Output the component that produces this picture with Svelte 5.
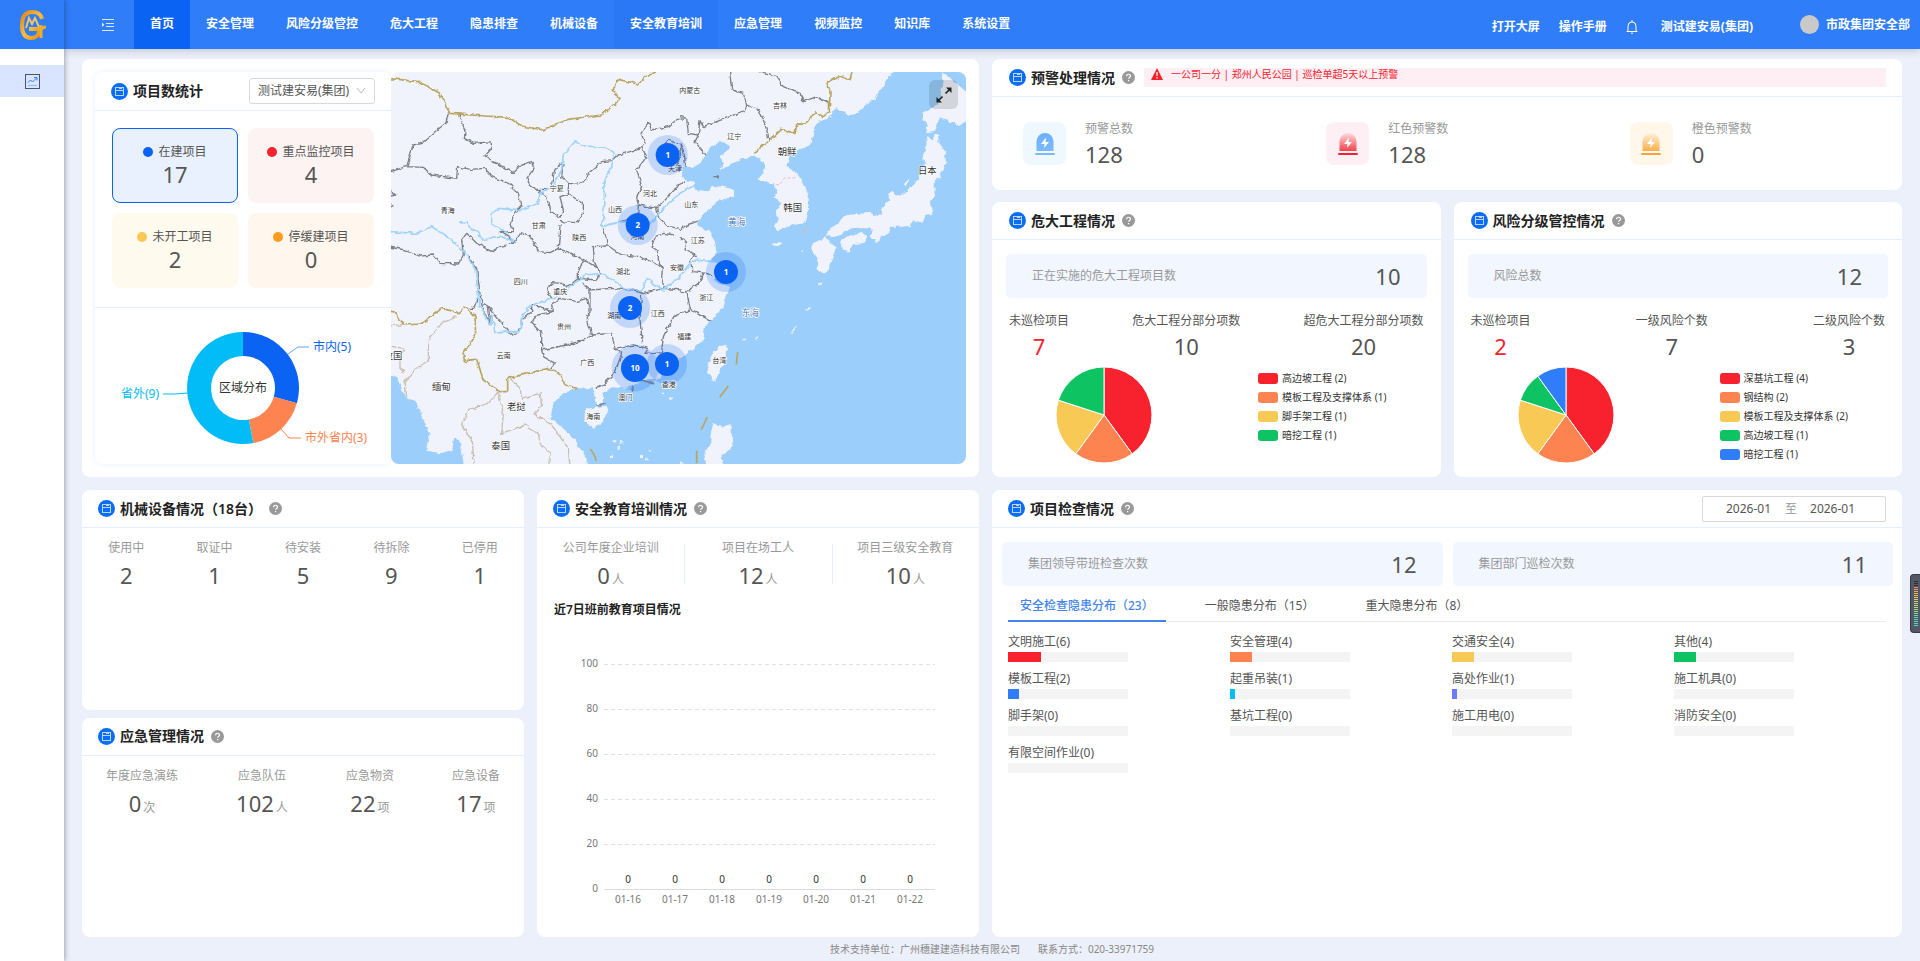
<svelte:options runes={true} />

<script lang="ts">
  type Slice = { name: string; value: number; color: string }

  const navItems = [
    '首页',
    '安全管理',
    '风险分级管控',
    '危大工程',
    '隐患排查',
    '机械设备',
    '安全教育培训',
    '应急管理',
    '视频监控',
    '知识库',
    '系统设置',
  ]

  const projectStats = [
    { name: '在建项目', value: 17, tone: 'blue' },
    { name: '重点监控项目', value: 4, tone: 'red' },
    { name: '未开工项目', value: 2, tone: 'yellow' },
    { name: '停缓建项目', value: 0, tone: 'orange' },
  ]
  let activeStat = $state('在建项目')

  const areas: Slice[] = [
    { name: '市内', value: 5, color: '#0b63f3' },
    { name: '市外省内', value: 3, color: '#fd8350' },
    { name: '省外', value: 9, color: '#02bcf7' },
  ]

  const warnings = [
    { name: '预警总数', value: 128, id: 'total', from: '#6cb0ff', to: '#7db9ff', base: '#7db9ff', bg: '#eff7ff' },
    { name: '红色预警数', value: 128, id: 'red', from: '#ffdbe0', to: '#f4434c', base: '#f5222d', bg: '#feeff4' },
    { name: '橙色预警数', value: 0, id: 'orange', from: '#fff0da', to: '#fbae4c', base: '#f9a43a', bg: '#fff7ea' },
  ]

  const pieCards = [
    {
      title: '危大工程情况',
      total: { name: '正在实施的危大工程项目数', value: 10 },
      stats: [
        { name: '未巡检项目', value: 7 },
        { name: '危大工程分部分项数', value: 10 },
        { name: '超危大工程分部分项数', value: 20 },
      ],
      slices: [
        { name: '高边坡工程', value: 2, color: '#f7222d' },
        { name: '模板工程及支撑体系', value: 1, color: '#fd8350' },
        { name: '脚手架工程', value: 1, color: '#f9c956' },
        { name: '暗挖工程', value: 1, color: '#0dc362' },
      ],
    },
    {
      title: '风险分级管控情况',
      total: { name: '风险总数', value: 12 },
      stats: [
        { name: '未巡检项目', value: 2 },
        { name: '一级风险个数', value: 7 },
        { name: '二级风险个数', value: 3 },
      ],
      slices: [
        { name: '深基坑工程', value: 4, color: '#f7222d' },
        { name: '钢结构', value: 2, color: '#fd8350' },
        { name: '模板工程及支撑体系', value: 2, color: '#f9c956' },
        { name: '高边坡工程', value: 1, color: '#0dc362' },
        { name: '暗挖工程', value: 1, color: '#2f7df9' },
      ],
    },
  ]

  const machines = [
    { name: '使用中', value: 2 },
    { name: '取证中', value: 1 },
    { name: '待安装', value: 5 },
    { name: '待拆除', value: 9 },
    { name: '已停用', value: 1 },
  ]
  const emergency = [
    { name: '年度应急演练', value: 0, unit: '次' },
    { name: '应急队伍', value: 102, unit: '人' },
    { name: '应急物资', value: 22, unit: '项' },
    { name: '应急设备', value: 17, unit: '项' },
  ]
  const education = [
    { name: '公司年度企业培训', value: 0 },
    { name: '项目在场工人', value: 12 },
    { name: '项目三级安全教育', value: 10 },
  ]
  const days = ['01-16', '01-17', '01-18', '01-19', '01-20', '01-21', '01-22']
  const ticks = [100, 80, 60, 40, 20]

  const tabs = [
    { name: '安全检查隐患分布', count: 23 },
    { name: '一般隐患分布', count: 15 },
    { name: '重大隐患分布', count: 8 },
  ]
  let activeTab = $state(0)

  const hazards: Slice[] = [
    { name: '文明施工', value: 6, color: '#f7222d' },
    { name: '安全管理', value: 4, color: '#fd8350' },
    { name: '交通安全', value: 4, color: '#f9c956' },
    { name: '其他', value: 4, color: '#0dc362' },
    { name: '模板工程', value: 2, color: '#2f7df9' },
    { name: '起重吊装', value: 1, color: '#02bcf7' },
    { name: '高处作业', value: 1, color: '#6b79fc' },
    { name: '施工机具', value: 0, color: '' },
    { name: '脚手架', value: 0, color: '' },
    { name: '基坑工程', value: 0, color: '' },
    { name: '施工用电', value: 0, color: '' },
    { name: '消防安全', value: 0, color: '' },
    { name: '有限空间作业', value: 0, color: '' },
  ]
  const hazardTotal = hazards.reduce((n, h) => n + h.value, 0)

  let company = $state('测试建安易(集团)')
  let startMonth = $state('2026-01')
  let endMonth = $state('2026-01')

  const provinces = [
    { name: '内蒙古', x: 914, y: 99 },
    { name: '吉林', x: 1185, y: 143 },
    { name: '辽宁', x: 1048, y: 237 },
    { name: '天津', x: 870, y: 334 },
    { name: '河北', x: 795, y: 409 },
    { name: '山西', x: 690, y: 457 },
    { name: '宁夏', x: 515, y: 393 },
    { name: '青海', x: 188, y: 458 },
    { name: '甘肃', x: 461, y: 503 },
    { name: '陕西', x: 583, y: 541 },
    { name: '山东', x: 919, y: 441 },
    { name: '河南', x: 757, y: 538 },
    { name: '江苏', x: 938, y: 550 },
    { name: '安徽', x: 876, y: 630 },
    { name: '湖北', x: 714, y: 643 },
    { name: '四川', x: 407, y: 671 },
    { name: '重庆', x: 526, y: 703 },
    { name: '浙江', x: 964, y: 720 },
    { name: '湖南', x: 688, y: 773 },
    { name: '江西', x: 818, y: 768 },
    { name: '贵州', x: 537, y: 806 },
    { name: '福建', x: 898, y: 838 },
    { name: '云南', x: 356, y: 895 },
    { name: '广西', x: 607, y: 914 },
    { name: '台湾', x: 1003, y: 908 },
    { name: '香港', x: 851, y: 981 },
    { name: '澳门', x: 721, y: 1020 },
    { name: '海南', x: 625, y: 1078 },
  ]
  const countries = [
    { name: '朝鲜', x: 1206, y: 285 },
    { name: '韩国', x: 1223, y: 452 },
    { name: '日本', x: 1627, y: 341 },
    { name: '缅甸', x: 169, y: 991 },
    { name: '老挝', x: 394, y: 1050 },
    { name: '泰国', x: 347, y: 1168 },
    { name: '孟加拉国', x: -4, y: 898 },
  ]
  const clusters = [
    { count: 1, x: 848, y: 285, r: 36 },
    { count: 2, x: 758, y: 495, r: 36 },
    { count: 1, x: 1023, y: 636, r: 36 },
    { count: 2, x: 735, y: 744, r: 36 },
    { count: 10, x: 750, y: 924, r: 42 },
    { count: 1, x: 846, y: 912, r: 36 },
  ]

  function arcs(list: Slice[], cx: number, cy: number, outer: number, inner = 0) {
    const total = list.reduce((n, s) => n + s.value, 0)
    const at = (r: number, t: number) => {
      const a = t * 2 * Math.PI
      return `${(cx + r * Math.sin(a)).toFixed(2)} ${(cy - r * Math.cos(a)).toFixed(2)}`
    }
    let sum = 0
    return list.map((s) => {
      const a = sum / total
      sum += s.value
      const b = sum / total
      const large = b - a > 0.5 ? 1 : 0
      const back = inner ? `L${at(inner, b)}A${inner} ${inner} 0 ${large} 0 ${at(inner, a)}Z` : `L${cx} ${cy}Z`
      return { color: s.color, d: `M${at(outer, a)}A${outer} ${outer} 0 ${large} 1 ${at(outer, b)}${back}` }
    })
  }
</script>

{#snippet titleIcon()}
  <svg class="title-icon" width="17" height="17" viewBox="0 0 17 17" fill="none" aria-hidden="true">
    <circle cx="8.5" cy="8.5" r="8.5" fill="#0b6df4" />
    <rect x="4.5" y="4.5" width="8" height="8" stroke="#b9d6ff" />
    <path d="M5 7.5h7M8 5.5h3" stroke="#b9d6ff" />
  </svg>
{/snippet}

{#snippet help()}
  <svg class="help" width="13" height="13" viewBox="0 0 13 13" fill="none" aria-hidden="true">
    <circle cx="6.5" cy="6.5" r="6.5" fill="#999" />
    <path d="M4.6 5.2c0-2.6 3.9-2.5 3.9-.2 0 1.4-1.9 1.5-1.9 2.8M6.6 9v1.2" stroke="#fff" stroke-width="1.2" />
  </svg>
{/snippet}

{#snippet heading(text: string)}
  {@render titleIcon()}
  <h2>{text}</h2>
  {@render help()}
{/snippet}

{#snippet stat(name: string, value: number, unit = '')}
  <div class="stat">
    <span class="stat-name">{name}</span>
    <span class="num">{value}{#if unit}<small>{unit}</small>{/if}</span>
  </div>
{/snippet}

<div class="app">
  <aside>
    <a class="logo" href="#home" aria-label="首页">
      <svg width="28" height="32" viewBox="0 0 28 32" fill="none">
        <defs>
          <linearGradient id="gold" x1="0" y1="0" x2="1" y2="1">
            <stop offset="0" stop-color="#e0841c" />
            <stop offset=".5" stop-color="#f9bf3e" />
            <stop offset="1" stop-color="#e3890f" />
          </linearGradient>
        </defs>
        <path d="M24 10C23 5 19 3 14 3 7 3 4 8 4 16s3 13 9 13c5 0 8-3 8-7v-2H11" stroke="url(#gold)" stroke-width="4" />
        <path d="M8 19l3-10 3 6 3-6 4 9" stroke="#f6c463" stroke-width="2" />
        <path d="M23 16v13M23 21c1-2 2-3 5-3" stroke="#f3ad2c" stroke-width="3" />
      </svg>
    </a>
    <a class="side-item" href="#board" aria-label="数据看板">
      <svg width="15" height="15" viewBox="0 0 15 15" fill="none">
        <rect x=".5" y=".5" width="14" height="14" stroke="#4b5468" />
        <path d="M3 8.5l2.500-2.500 2 2 4-4M9 3.500h3v3" stroke="#2f7df9" />
        <path d="M3 11.500h9" stroke="#8db6fb" />
      </svg>
    </a>
  </aside>

  <div class="page">
    <header>
      <button class="fold" aria-label="展开菜单">
        <svg width="12" height="12" viewBox="0 0 12 12" fill="none" stroke="#dce9ff">
          <path d="M0 .5h12M4 4.500h8M4 7.500h8M0 11.500h12" />
          <path d="M0 3.500v4.500l2.500-2.250z" fill="#dce9ff" stroke="none" />
        </svg>
      </button>
      <nav>
        {#each navItems as item, i}
          <a href="#{item}" class:active={i === 0} class:hovered={i === 6}>{item}</a>
        {/each}
      </nav>
      <div class="tools">
        <a href="#screen">打开大屏</a>
        <a href="#manual">操作手册</a>
        <button class="bell" aria-label="消息">
          <svg width="12" height="14" viewBox="0 0 12 14" fill="none" stroke="#fff">
            <path d="M2 11V6a4 4 0 0 1 8 0v5M.5 11.500h11M6 0v2M5 13.200h2" />
          </svg>
        </button>
        <span>测试建安易(集团)</span>
      </div>
      <div class="user">
        <span class="avatar"></span>
        市政集团安全部
      </div>
    </header>

    <main>
      <section class="card overview">
        <div class="project">
          <div class="card-head">
            {@render titleIcon()}
            <h2>项目数统计</h2>
            <div class="company">
              <select aria-label="公司" bind:value={company}>
                <option>测试建安易(集团)</option>
              </select>
              <svg width="10" height="8" viewBox="0 0 10 8" fill="none" stroke="#bbb" aria-hidden="true">
                <path d="M1 1l4 5 4-5" />
              </svg>
            </div>
          </div>
          <div class="boxes">
            {#each projectStats as s}
              <button class="box {s.tone}" class:active={activeStat === s.name} onclick={() => (activeStat = s.name)}>
                <span class="box-name"><i></i>{s.name}</span>
                <span class="num">{s.value}</span>
              </button>
            {/each}
          </div>
          <svg class="donut" width="296" height="156" viewBox="0 0 296 156">
            {#each arcs(areas, 148, 80, 56, 32) as a}
              <path d={a.d} fill={a.color} />
            {/each}
            <g fill="none">
              <path d="M193 46l10-7h11" stroke="#6d9ff8" />
              <path d="M186 121l8 9h12" stroke="#fd8350" />
              <path d="M68 86h12l13-1" stroke="#02bcf7" />
            </g>
            <text x="148" y="84" text-anchor="middle" fill="#333">区域分布</text>
            <text x="218" y="43" fill="#0b63f3">市内(5)</text>
            <text x="210" y="134" fill="#fd8350">市外省内(3)</text>
            <text x="64" y="90" text-anchor="end" fill="#02bcf7">省外(9)</text>
          </svg>
        </div>

        <div class="map">
          <svg viewBox="18 36 1725 1176" preserveAspectRatio="xMidYMid slice">
            <defs>
              <!-- roughens straight segments into coast-like edges -->
              <filter id="rough" x="0" y="0" width="100%" height="100%">
                <feTurbulence type="fractalNoise" baseFrequency=".06" numOctaves="2" seed="4" />
                <feDisplacementMap in="SourceGraphic" scale="14" xChannelSelector="R" yChannelSelector="G" />
              </filter>
            </defs>
            <rect x="18" y="36" width="1725" height="1176" fill="#f0f3fb" />
            <g filter="url(#rough)">
              <g fill="#9bcefa">
                <path d="M1530 30L1495 75 1468 118 1415 158 1390 168 1383 158 1365 155 1355 140 1340 160 1325 175 1300 185 1285 210 1281 248 1245 268 1213 290 1205 318 1240 345 1258 380 1271 405 1272 450 1263 483 1235 492 1210 500 1175 512 1168 498 1182 480 1173 455 1187 430 1167 410 1177 392 1160 370 1122 360 1137 330 1137 305 1105 290 1070 295 1050 308 1005 332 1015 310 1007 292 1035 262 1025 248 1003 246 985 258 963 285 943 312 920 325 900 315 888 330 890 350 910 362 930 365 925 380 935 390 965 393 980 378 1015 380 1047 390 1047 410 1005 420 980 440 955 462 937 495 970 512 990 545 995 580 975 598 1000 612 1005 640 985 662 1005 672 1035 680 1025 710 1015 742 985 775 960 800 955 840 930 862 905 885 870 905 845 940 810 960 770 960 742 978 715 985 680 982 655 1000 653 1030 635 1033 628 1003 620 985 578 985 535 1000 505 1030 497 1075 540 1110 575 1150 605 1195 605 1232 1775 1232 1775 20Z" />
                <path d="M0 945L35 950 45 975 65 1015 95 1030 110 1070 122 1090 134 1120 127 1172 165 1180 202 1170 208 1130 228 1150 238 1232 0 1232Z" />
              </g>
              <g fill="#f0f3fb">
                <path d="M600 1050L630 1040 665 1038 670 1050 650 1090 625 1103 598 1085Z" />
                <g transform="translate(885 0)">
                  <path d="M790 36L870 105 880 165 838 198 780 172 765 215 740 220 735 205 742 190 727 180 730 160 748 150 775 130 785 90Z" />
                  <path d="M745 232L760 238 760 222 778 222 778 250 795 275 798 310 780 345 783 352 765 360 763 405 750 430 758 460 735 470 728 488 700 480 690 498 665 500 630 500 628 515 605 530 592 548 572 530 575 505 545 505 500 510 480 525 440 530 440 515 500 465 575 458 580 468 602 463 605 445 628 420 625 400 640 392 645 410 680 395 715 355 720 340 735 315 728 290 738 255Z" />
                  <path d="M480 545L500 530 545 515 560 530 550 550 520 552 502 575 485 560Z" />
                  <path d="M392 555L415 540 438 532 450 550 470 565 455 600 440 635 428 642 412 630 412 590 395 570Z" />
                  <path d="M120 858L140 855 143 865 130 920 108 955 105 970 85 940 82 920 95 885Z" />
                  <path d="M100 1090L130 1100 152 1092 152 1125 160 1140 150 1170 125 1185 128 1232 80 1232 72 1170 90 1160 92 1120Z" />
                  <ellipse cx="293" cy="552" rx="13" ry="6" />
                  <path d="M675 370l8-14 3 6-6 14zM375 750l20-10-8 10zM332 820l16-24 2 8-12 16zM418 668h10v5h-10zM225 830h9v5h-9zM188 836h9v5h-9zM362 578l8-6v6z" />
                </g>
                <path d="M683 1138h8v6h-8zM705 1144h10v7h-10zM675 1185h9v6h-9zM697 1160h8v6h-8zM765 1185h9v7h-9zM790 1168h7v6h-7zM780 1195h8v6h-8zM830 998h7v7h-7zM856 1012h7v7h-7zM885 1205h10v6h-10z" />
              </g>
              <g fill="none" stroke="#7c7f8a" stroke-width="4" stroke-linejoin="round">
                <path d="M220 160L240 210 238 235 265 250 318 245 320 265 300 288 335 310 362 325 385 338 400 318 440 308 447 325 425 355 435 375 455 388 495 388" />
                <path d="M190 162L182 190 150 215 110 250 85 255 65 320 8 338M65 320L115 322 140 345 215 355 218 320 255 328 300 325 320 350 370 370 400 400 408 440 385 470 378 495 385 515 345 515 370 530 385 550" />
                <path d="M8 385L32 405 8 410M8 428L26 436 8 445M8 560L60 570 105 588 145 585 165 610 220 612 235 585 230 540 245 520 275 550 320 575 345 560 385 550 405 518 440 532 460 575 495 578 520 565 525 495" />
                <path d="M535 310L510 325 498 380M535 310L530 350 550 370 580 372 605 358 610 340 650 305 682 302 700 285 735 275 770 262" />
                <path d="M455 388L485 410 495 455 525 472 535 450 525 410 550 402 550 372M550 402L595 430 595 460 578 488 525 485M520 565L580 590 640 625 645 640 628 605 625 560 670 558" />
                <path d="M770 262L780 250 768 220 790 190 800 210 850 200 880 175 900 178M770 262L785 290 755 330 770 380 755 410 760 435 815 445 865 390 900 365" />
                <path d="M830 262L850 240 885 255 890 285 870 320" />
                <path d="M760 435L758 470 705 485M815 445L820 470 850 500 885 505M655 505L670 558 710 585 765 590 820 615 832 625 830 655 838 685M800 560L810 530 835 520 870 525M800 560L820 575 820 600 832 625" />
                <path d="M250 585L275 625 285 700 295 755 318 790 310 740 295 730M310 740L380 825 410 805M280 715L270 745 255 745M405 810L410 780 440 755 440 730" />
                <path d="M440 730L470 745 505 755 500 735 525 715 575 725 605 715 610 740M485 690L500 668 530 670 550 680 580 655 580 635 595 600M485 690L500 715M580 655L635 660 645 640M440 790L455 765 505 755M440 790L470 820 470 870 545 855 600 840 620 825 605 770 615 760 615 690" />
                <path d="M590 670L615 690 680 685 730 690 775 700 838 685 890 690M770 700L765 780 772 850M620 825L680 820 690 865 745 855 790 865 780 880 830 875 835 830 865 770 900 755" />
                <path d="M470 870L475 890 510 910 500 925M690 865L710 880 690 940 660 970 632 985M745 980L738 992M770 960L808 972M635 1035L662 1030" />
                <g transform="translate(885 0)">
                  <path d="M148 26L155 90 190 100 200 135 195 150 150 170 110 185 70 200 60 182 55 225 45 245 78 285M200 135L238 150 258 200 268 245M220 26L290 50 310 80 360 100 370 125 410 110 448 130" />
                  <path d="M0 170L20 175 25 220 55 225M0 250L12 280 18 320M0 510L20 495 58 482M0 530L20 550 15 570 40 580 50 590M40 580L30 605 40 635 80 640 100 648M70 640L55 670 20 695 0 695M20 695L30 745 70 770 95 785M0 760L30 750M100 350h18" />
                </g>
              </g>
              <g fill="none" stroke="#9fd3fc" stroke-width="5" stroke-linejoin="round">
                <path d="M8 515L95 520 140 500 200 540 245 585 270 625 285 740 315 795 322 765 330 820 370 815 405 815 410 770 440 735 505 715 550 685 600 645 650 640 690 665 720 690 770 690 785 655 835 690 890 645 925 600 990 605" />
                <path d="M222 490L245 485 255 505 280 515 290 540 345 528 385 545 370 520 325 495 318 460 345 445 400 452 460 430 465 400 500 385 530 330 535 285 570 245 600 258 660 262 688 280 680 320 655 370 660 430 650 500 705 485 795 490 850 430 885 400 930 375" />
              </g>
              <g fill="none" stroke="#c9bfb0" stroke-width="4" stroke-linejoin="round">
                <path d="M8 797L55 795M215 770L170 790 130 840 130 900 90 930 60 965 65 1010M8 858L60 865 45 885 45 925 60 940" />
                <path d="M375 955L405 985 410 1015 465 1000 470 1035 445 1060 500 1095 550 1165 555 1222M340 995L310 1030 250 1050 230 1095 262 1145 268 1222M340 995L355 1060 350 1120 420 1095 460 1120 465 1150 495 1180 495 1222" />
                <path d="M1265 500l-7 22" />
              </g>
              <g fill="none" stroke="#b9a563" stroke-width="5" stroke-linejoin="round">
                <path d="M8 55L100 65 162 98 195 160 300 168 370 172 410 198 475 210 550 178 650 165 705 118 685 90 700 58 760 72 790 42 840 30" />
                <path d="M8 755L35 760 55 795 110 792 170 745 220 758 240 738 270 770 272 825 235 880 238 902 275 898 295 960 345 995 368 995 368 955 430 940 490 925 525 942 540 975 578 986" />
                <path d="M1105 280L1150 245 1190 208 1230 220 1235 195 1270 185 1290 155 1315 170 1333 155 1335 90 1325 68 1360 48 1395 60 1402 30" />
              </g>
            </g>
            <g fill="none" stroke="#b9a563" stroke-width="5">
              <path d="M615 1167q14 14 19 36M1058 876l-4 38M1030 978l-26 34M967 1071l-18 37M935 1172v38" />
            </g>
            <path d="M1172 374h12l14-20h30l8-8" fill="none" stroke="#e9a6b8" stroke-width="2" stroke-dasharray="10 5" />
            <g class="provinces">
              {#each provinces as p}
                <text x={p.x} y={p.y}>{p.name}</text>
              {/each}
            </g>
            <g class="countries">
              {#each countries as c}
                <text x={c.x} y={c.y}>{c.name}</text>
              {/each}
            </g>
            <text class="sea" x="1055" y="495">黄海</text>
            <text class="sea" x="1096" y="768">东海</text>
            {#each clusters as c}
              <circle cx={c.x} cy={c.y} r={c.r * 1.67} fill="#0b63f3" opacity=".2" />
              <circle cx={c.x} cy={c.y} r={c.r} fill="#0b63f3" />
              <text class="count" x={c.x} y={c.y + 8}>{c.count}</text>
            {/each}
          </svg>
          <button class="expand" aria-label="全屏">
            <svg width="16" height="16" viewBox="0 0 16 16" fill="none" stroke="#222" stroke-width="1.6">
              <path d="M9.500 6.500l5-5M6.500 9.500l-5 5" />
              <path d="M10 .5h5.500V6zM.5 10v5.500H6z" fill="#222" stroke="none" />
            </svg>
          </button>
        </div>
      </section>

      <div class="right-top">
        <section class="card">
          <div class="card-head">
            {@render heading('预警处理情况')}
            <div class="notice">
              <svg width="12" height="12" viewBox="0 0 12 12" aria-hidden="true">
                <path d="M6 0l6 12H0z" fill="#f5222d" />
                <path d="M6 4v4M6 9v1.500" stroke="#fff" stroke-width="1.200" />
              </svg>
              一公司一分 | 郑州人民公园 | 巡检单超5天以上预警
            </div>
          </div>
          <div class="warnings">
            {#each warnings as w}
              <div class="warning">
                <span class="lamp" style:background={w.bg}>
                  <svg width="22" height="24" viewBox="0 0 22 24" aria-hidden="true">
                    <defs>
                      <linearGradient id="lamp-{w.id}" x2="0" y2="1">
                        <stop offset="0" stop-color={w.from} />
                        <stop offset="1" stop-color={w.to} />
                      </linearGradient>
                    </defs>
                    <path d="M2.500 19V9.500a8.500 8.500 0 0 1 17 0V19z" fill="url(#lamp-{w.id})" />
                    <path d="M12 5.500L7 12h3.500L10 16l5-6h-3.500z" fill="#fff" />
                    <rect x="1" y="21" width="20" height="2" rx="1" fill={w.base} />
                  </svg>
                </span>
                <div>
                  <span class="stat-name">{w.name}</span>
                  <span class="num">{w.value}</span>
                </div>
              </div>
            {/each}
          </div>
        </section>

        <div class="pies">
          {#each pieCards as card}
            <section class="card">
              <div class="card-head">{@render heading(card.title)}</div>
              <div class="pie-body">
                <div class="tile">
                  <span>{card.total.name}</span>
                  <span class="num">{card.total.value}</span>
                </div>
                <div class="pie-stats">
                  {#each card.stats as s}
                    {@render stat(s.name, s.value)}
                  {/each}
                </div>
                <div class="pie-row">
                  <svg width="96" height="96" viewBox="0 0 96 96">
                    {#each arcs(card.slices, 48, 48, 48) as a}
                      <path d={a.d} fill={a.color} stroke="#fff" />
                    {/each}
                  </svg>
                  <ul>
                    {#each card.slices as s}
                      <li><i style:background={s.color}></i>{s.name} ({s.value})</li>
                    {/each}
                  </ul>
                </div>
              </div>
            </section>
          {/each}
        </div>
      </div>

      <div class="left-bottom">
        <div class="stack">
          <section class="card">
            <div class="card-head">{@render heading('机械设备情况（18台）')}</div>
            <div class="figures even">
              {#each machines as m}
                {@render stat(m.name, m.value)}
              {/each}
            </div>
          </section>
          <section class="card">
            <div class="card-head">{@render heading('应急管理情况')}</div>
            <div class="figures spread">
              {#each emergency as e}
                {@render stat(e.name, e.value, e.unit)}
              {/each}
            </div>
          </section>
        </div>

        <section class="card">
          <div class="card-head">{@render heading('安全教育培训情况')}</div>
          <div class="figures even divided">
            {#each education as e}
              {@render stat(e.name, e.value, '人')}
            {/each}
          </div>
          <h3>近7日班前教育项目情况</h3>
          <svg class="chart" viewBox="0 0 442 300">
            {#each ticks as t, i}
              <text x="61" y={41 + i * 45} text-anchor="end">{t}</text>
              <path d="M67 {38.5 + i * 45}h331" stroke="#e0e0e0" stroke-dasharray="4 3" />
            {/each}
            <text x="61" y="266" text-anchor="end">0</text>
            <path d="M67 263.500h331" stroke="#d9dbe0" />
            {#each days as d, i}
              <text class="value" x={91 + i * 47} y="257" text-anchor="middle">0</text>
              <text x={91 + i * 47} y="277" text-anchor="middle">{d}</text>
            {/each}
          </svg>
        </section>
      </div>

      <section class="card">
        <div class="card-head">
          {@render heading('项目检查情况')}
          <div class="range">
            <input type="text" aria-label="开始月份" bind:value={startMonth} />
            <span>至</span>
            <input type="text" aria-label="结束月份" bind:value={endMonth} />
          </div>
        </div>
        <div class="tiles">
          <div class="tile">
            <span>集团领导带班检查次数</span>
            <span class="num">12</span>
          </div>
          <div class="tile">
            <span>集团部门巡检次数</span>
            <span class="num">11</span>
          </div>
        </div>
        <div class="tabs" role="tablist">
          {#each tabs as t, i}
            <button role="tab" aria-selected={activeTab === i} class:active={activeTab === i} onclick={() => (activeTab = i)}>
              {t.name}（{t.count}）
            </button>
          {/each}
        </div>
        <div class="hazards">
          {#each hazards as h}
            <div>
              <span>{h.name}({h.value})</span>
              <div class="track">
                <div style:width="{(h.value / hazardTotal) * 100}%" style:background={h.color}></div>
              </div>
            </div>
          {/each}
        </div>
      </section>
    </main>

    <footer>
      <span>技术支持单位：广州穗建建造科技有限公司</span>
      <span>联系方式：020-33971759</span>
    </footer>
  </div>

  <div class="meter" aria-hidden="true"></div>
</div>

<style>
  :global(body) {
    background: #ecf0fa;
  }
  .app {
    display: flex;
    min-height: 100vh;
    color: #555;
    font-family: 'Noto Sans', 'Noto Sans CJK SC', sans-serif;
    font-size: 12px;
    line-height: 20px;
  }
  .app :global(*) {
    box-sizing: border-box;
  }
  a {
    color: inherit;
    text-decoration: none;
  }
  button {
    padding: 0;
    border: 0;
    background: none;
    color: inherit;
    font: inherit;
    cursor: pointer;
  }
  svg {
    display: block;
    flex: none;
  }

  aside {
    position: relative;
    z-index: 2;
    flex: none;
    width: 64px;
    background: #fff;
    box-shadow: 1px 0 5px rgba(0, 21, 41, 0.35);
  }
  .logo {
    display: flex;
    align-items: center;
    justify-content: center;
    height: 49px;
    background: #2f7df9;
  }
  .side-item {
    display: flex;
    align-items: center;
    justify-content: center;
    height: 32px;
    margin-top: 16px;
    background: #d9e5fe;
  }

  .page {
    display: flex;
    flex: 1;
    flex-direction: column;
    min-width: 0;
  }
  header {
    display: flex;
    align-items: center;
    height: 49px;
    padding: 0 10px 0 38px;
    background: #2f7df9;
    box-shadow: 0 2px 8px rgba(0, 21, 41, 0.18);
    color: #fff;
    font-weight: 700;
    white-space: nowrap;
  }
  .fold {
    margin-right: 20px;
  }
  nav {
    display: flex;
    flex: 1;
    line-height: 48px;
  }
  nav a {
    height: 49px;
    padding: 0 16px;
  }
  nav a.active {
    background: #0b63f3;
  }
  nav a.hovered {
    background: #2b78f7;
  }
  .tools {
    display: flex;
    align-items: center;
    gap: 19px;
    padding-top: 4px;
    margin-right: 47px;
  }
  .bell {
    margin-right: 4px;
  }
  .user {
    display: flex;
    align-items: center;
    gap: 7px;
  }
  .avatar {
    width: 19px;
    height: 19px;
    border-radius: 50%;
    background: #c9c9c9;
  }

  main {
    display: grid;
    flex: 1;
    grid-template-columns: minmax(0, 897fr) minmax(0, 910fr);
    grid-template-rows: auto 1fr;
    gap: 13px;
    padding: 10px 18px 0;
  }
  .card {
    border-radius: 8px;
    background: #fff;
  }
  .card-head {
    display: flex;
    align-items: center;
    height: 38px;
    padding: 0 16px;
    border-bottom: 1px solid #e6effd;
  }
  h2 {
    margin: 0 7px 0 5px;
    color: #222;
    font-size: 14px;
    font-weight: 600;
  }
  .num {
    display: block;
    color: #555;
    font-size: 22px;
    line-height: 30px;
  }
  .num small {
    margin-left: 2px;
    color: #999;
    font-size: 12px;
  }
  .stat-name {
    display: block;
    white-space: nowrap;
  }

  .overview {
    display: flex;
    padding: 13px;
  }
  .project {
    flex: none;
    width: 296px;
    border-radius: 8px;
    box-shadow: 0 0 6px #e6effd;
  }
  .project .card-head {
    height: 39px;
  }
  .company {
    position: relative;
    width: 126px;
    margin-left: auto;
  }
  .company select {
    width: 100%;
    height: 26px;
    padding: 0 8px;
    border: 1px solid #d9d9d9;
    border-radius: 3px;
    appearance: none;
    background: #fff;
    color: #555;
    font: inherit;
  }
  .company svg {
    position: absolute;
    top: 9px;
    right: 9px;
    pointer-events: none;
  }
  .boxes {
    display: grid;
    grid-template-columns: 1fr 1fr;
    gap: 10px;
    padding: 17px 17px 19px;
    border-bottom: 1px solid #e6effd;
  }
  .box {
    height: 75px;
    padding-bottom: 4px;
    border: 1px solid transparent;
    border-radius: 8px;
  }
  .box .num {
    line-height: 24px;
  }
  .box-name {
    display: flex;
    align-items: center;
    justify-content: center;
    gap: 5px;
  }
  .box i {
    width: 10px;
    height: 10px;
    border-radius: 50%;
  }
  .box.blue {
    background: #e9f1fe;
  }
  .box.active {
    border-color: #0b63f3;
  }
  .box.blue i {
    background: #0b63f3;
  }
  .box.red {
    background: #fef3f3;
  }
  .box.red i {
    background: #f7222d;
  }
  .box.yellow {
    background: #fffaee;
  }
  .box.yellow i {
    background: #f9c956;
  }
  .box.orange {
    background: #fff6ee;
  }
  .box.orange i {
    background: #fe9b1c;
  }
  .donut text {
    font-size: 12px;
  }

  .map {
    position: relative;
    flex: 1;
    overflow: hidden;
    border-radius: 8px;
  }
  .map > svg {
    position: absolute;
    width: 100%;
    height: 100%;
  }
  .map text {
    text-anchor: middle;
  }
  .provinces text,
  .countries text,
  .sea {
    paint-order: stroke;
    fill: #333;
    stroke: #fff;
    stroke-width: 4px;
  }
  .provinces {
    font-size: 21px;
  }
  .countries {
    font-size: 28px;
  }
  .map .sea {
    fill: #4b74b8;
    font-size: 26px;
  }
  .count {
    fill: #fff;
    font-size: 24px;
    font-weight: 700;
  }
  .expand {
    position: absolute;
    top: 8px;
    right: 8px;
    display: flex;
    align-items: center;
    justify-content: center;
    width: 29px;
    height: 29px;
    border-radius: 6px;
    background: rgba(0, 0, 0, 0.12);
  }

  .right-top {
    display: flex;
    flex-direction: column;
    gap: 12px;
  }
  .right-top .card-head {
    padding-left: 17px;
  }
  .notice {
    display: flex;
    flex: 1;
    gap: 8px;
    height: 19px;
    padding-left: 7px;
    margin-left: 9px;
    background: #feeff4;
    color: #f7222d;
    font-size: 10px;
    line-height: 12px;
  }
  .warnings {
    display: grid;
    grid-template-columns: repeat(3, 1fr);
  }
  .warning {
    display: flex;
    align-items: center;
    gap: 19px;
    height: 93px;
    padding-left: 31px;
    color: #999;
  }
  .lamp {
    display: flex;
    align-items: center;
    justify-content: center;
    width: 43px;
    height: 43px;
    border-radius: 8px;
  }
  .pies {
    display: grid;
    grid-template-columns: 1fr 1fr;
    gap: 13px;
  }
  .pie-body {
    padding: 14px;
  }
  .tile {
    display: flex;
    align-items: center;
    justify-content: space-between;
    height: 44px;
    padding: 0 26px;
    border-radius: 5px;
    background: #f1f6ff;
    color: #999;
  }
  .stat {
    text-align: center;
  }
  .pie-stats {
    display: flex;
    justify-content: space-between;
    padding: 13px 3px 0;
  }
  .pie-stats .stat:first-child .num {
    color: #f7222d;
  }
  .pie-row {
    display: grid;
    grid-template-columns: 6fr 5fr;
    height: 102px;
    padding: 6px 0 0 50px;
  }
  ul {
    padding: 2px 0 0;
    margin: 0;
    font-size: 10px;
    line-height: 19px;
    list-style: none;
    white-space: nowrap;
  }
  li {
    display: flex;
    align-items: center;
    gap: 4px;
    color: #333;
  }
  li i {
    width: 20px;
    height: 11px;
    border-radius: 3px;
  }

  .left-bottom {
    display: grid;
    grid-template-columns: 1fr 1fr;
    gap: 13px;
  }
  .stack {
    display: grid;
    grid-template-rows: 1fr 1fr;
    gap: 8px;
  }
  .figures {
    padding-top: 10px;
    color: #999;
  }
  .figures .num {
    margin-top: 2px;
  }
  .even {
    display: grid;
    grid-auto-columns: 1fr;
    grid-auto-flow: column;
  }
  .spread {
    display: flex;
    justify-content: space-between;
    padding-right: 24px;
    padding-left: 24px;
  }
  .divided .stat + .stat {
    background: linear-gradient(#e6effd, #e6effd) 0 6px / 1px 40px no-repeat;
  }
  h3 {
    margin: 5px 0 0 17px;
    color: #222;
    font-size: 12px;
    font-weight: 600;
  }
  .chart {
    width: 100%;
    margin-top: 6px;
  }
  .chart text {
    fill: #777;
    font-size: 10px;
  }
  .chart .value {
    fill: #333;
  }

  .range {
    display: flex;
    align-items: center;
    gap: 13px;
    width: 184px;
    height: 26px;
    padding-left: 23px;
    border: 1px solid #d9d9d9;
    border-radius: 2px;
    margin-left: auto;
    color: #999;
  }
  .range input {
    width: 46px;
    padding: 0;
    border: 0;
    background: none;
    color: #555;
    font: inherit;
  }
  .tiles {
    display: grid;
    grid-template-columns: 1fr 1fr;
    gap: 10px;
    padding: 14px 9px 0 10px;
  }
  .tabs {
    display: flex;
    gap: 27px;
    margin: 0 16px;
    border-bottom: 1px solid #ebebeb;
  }
  .tabs button {
    padding: 10px 12px 4px;
    border-bottom: 2px solid transparent;
    margin-bottom: -1px;
  }
  .tabs button.active {
    border-color: #4284ec;
    color: #4284ec;
    font-weight: 500;
  }
  .hazards {
    display: grid;
    grid-template-columns: repeat(4, 1fr);
    row-gap: 7px;
    padding: 10px 6px 0 16px;
  }
  .track {
    width: 120px;
    height: 10px;
    background: #f4f4f4;
  }
  .track div {
    height: 100%;
  }

  footer {
    display: flex;
    align-items: center;
    justify-content: center;
    gap: 18px;
    height: 24px;
    color: #888;
    font-size: 10px;
  }
  .meter {
    position: fixed;
    top: 574px;
    right: 0;
    z-index: 3;
    width: 10px;
    height: 59px;
    border: 1px solid #343a48;
    border-right: 0;
    border-radius: 4px 0 0 4px;
    background:
      repeating-linear-gradient(transparent 0 1px, #525866 1px 2px) 3px 6px / 4px 46px no-repeat,
      linear-gradient(#2a2f3a 12%, #ee8a60 14%, #efc95c 35%, #b9de73 55%, #5ad7a4 80%, #4fd9cf) 3px 6px / 4px 46px no-repeat,
      #525866;
  }
</style>
